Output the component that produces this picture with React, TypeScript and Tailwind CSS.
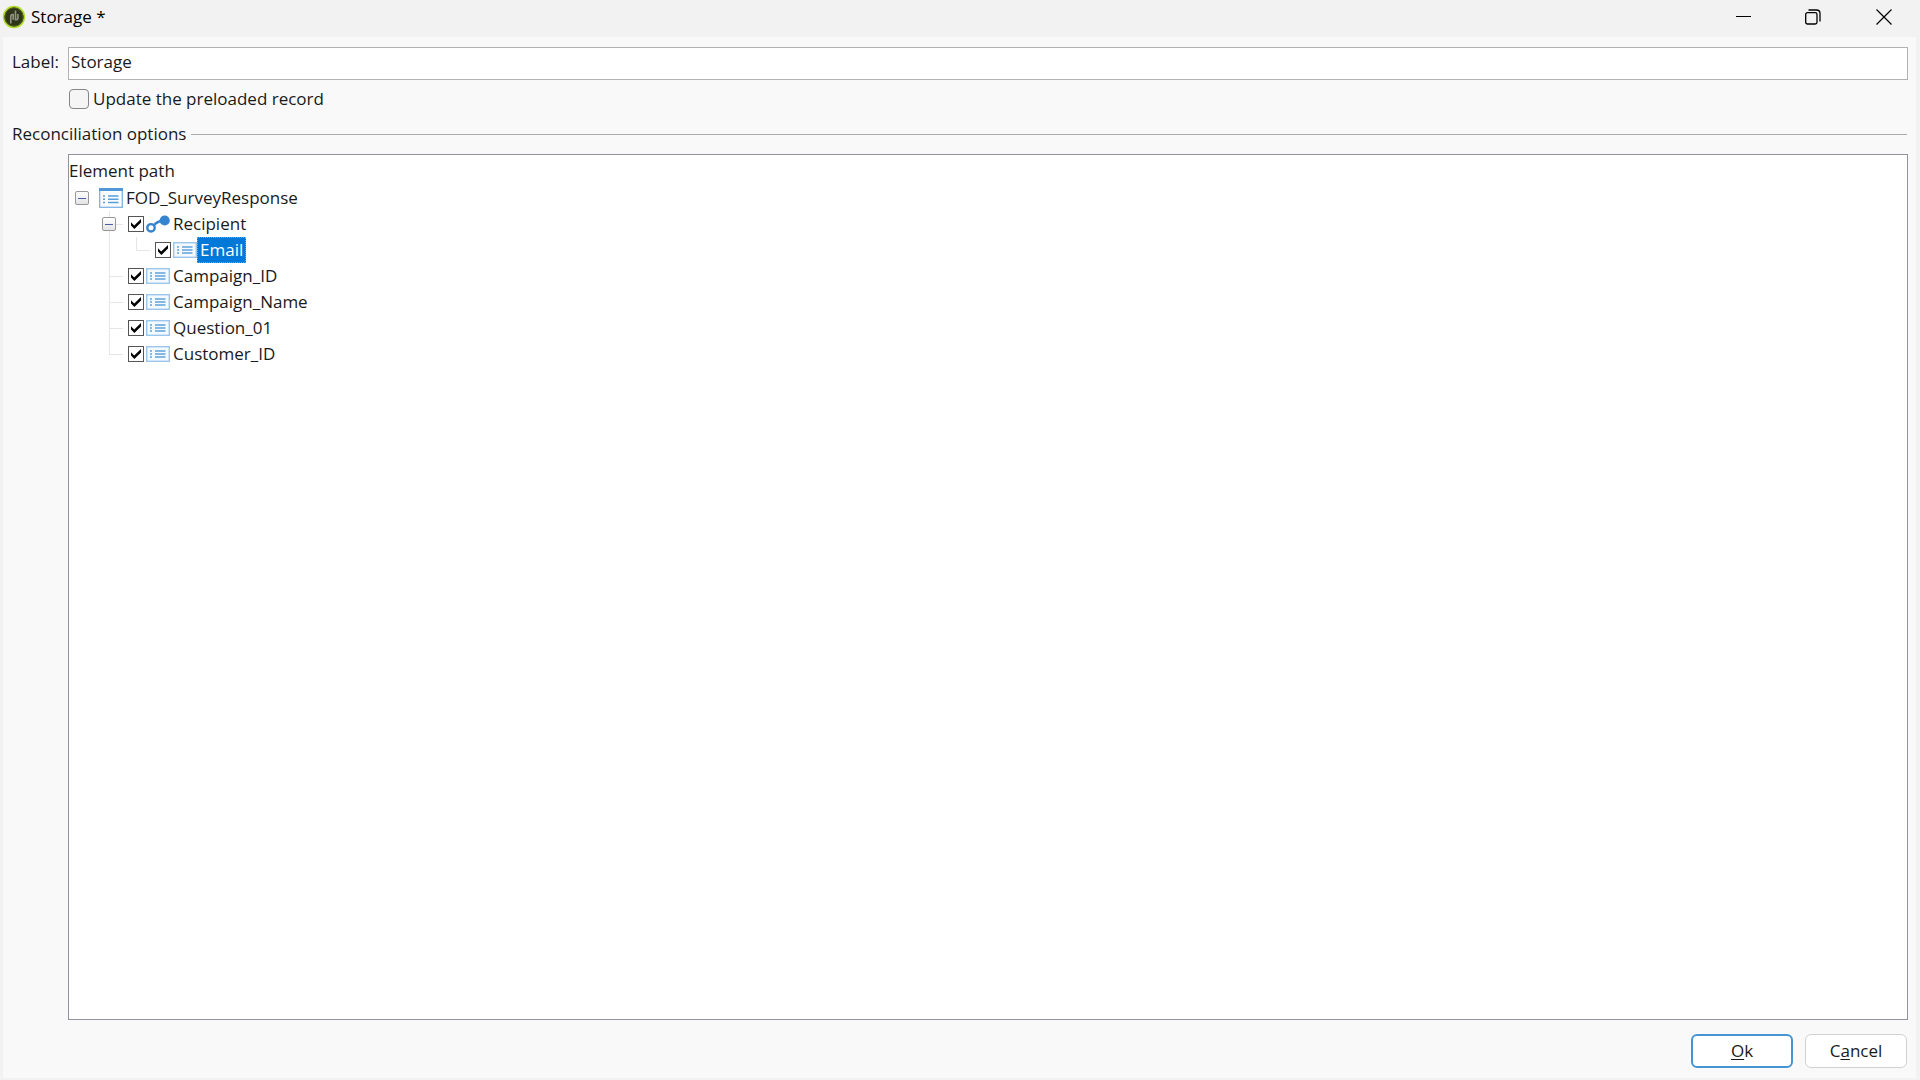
import { useState } from "react"
import clsx from "clsx"

type Guide = "blank" | "line" | "tee" | "corner" | "open" | "root"

type TreeNode = {
  name: string
  icon: "schema" | "link" | "field"
  guides: Guide[]
  checkable: boolean
}

const nodes: TreeNode[] = [
  { name: "FOD_SurveyResponse", icon: "schema", guides: ["root"], checkable: false },
  { name: "Recipient", icon: "link", guides: ["blank", "open"], checkable: true },
  { name: "Email", icon: "field", guides: ["blank", "line", "corner"], checkable: true },
  { name: "Campaign_ID", icon: "field", guides: ["blank", "tee"], checkable: true },
  { name: "Campaign_Name", icon: "field", guides: ["blank", "tee"], checkable: true },
  { name: "Question_01", icon: "field", guides: ["blank", "tee"], checkable: true },
  { name: "Customer_ID", icon: "field", guides: ["blank", "corner"], checkable: true },
]

function AppLogo() {
  return (
    <svg className="h-6 w-6" viewBox="0 0 24 24" aria-hidden="true">
      <circle cx="12" cy="12" r="10.4" fill="#2f3519" stroke="#b4dc2c" strokeWidth="1.6" />
      <circle cx="12" cy="12" r="9.2" fill="none" stroke="#55651f" strokeWidth="1" />
      <path
        d="M8.8 18.5v-7q0-2 1.800-2h.6v5.200M13.500 5.500v9.300h.6q1.800 0 1.800-2V9"
        fill="none"
        stroke="#8f9482"
        strokeWidth="1.6"
      />
    </svg>
  )
}

function SchemaIcon() {
  return (
    <svg className="h-5 w-6" viewBox="0 0 24 20" aria-hidden="true">
      <rect x="0.7" y="0.7" width="22.6" height="18.6" fill="#fafdff" stroke="#7db3e3" strokeWidth="1.3" />
      <path d="M0 1.5h24" stroke="#4f97d9" strokeWidth="3" />
      <path d="M4 8h2M4 11.2h2M4 14.4h2M9 8h10.5M9 11.2h10.5M9 14.4h10.5" stroke="#5a9edb" strokeWidth="1.5" />
    </svg>
  )
}

function FieldIcon() {
  return (
    <svg className="h-4 w-6" viewBox="0 0 24 16" aria-hidden="true">
      <rect x="0.7" y="0.7" width="22.6" height="14.6" fill="#f4faff" stroke="#9cc6eb" strokeWidth="1.4" />
      <path d="M4 5h2M4 8h2M4 11h2M9 5h10.5M9 8h10.5M9 11h10.5" stroke="#62a2dc" strokeWidth="1.5" />
    </svg>
  )
}

function LinkIcon() {
  return (
    <svg className="h-[18px] w-6" viewBox="0 0 24 18" aria-hidden="true">
      <circle cx="5" cy="12.8" r="3.7" fill="#fff" stroke="#3584d0" strokeWidth="2.4" />
      <path d="M8.5 9.8Q11 6.6 17 5.5" fill="none" stroke="#3584d0" strokeWidth="2.4" />
      <circle cx="18.7" cy="5.5" r="5.1" fill="#3584d0" />
    </svg>
  )
}

const icons = { schema: <SchemaIcon />, link: <LinkIcon />, field: <FieldIcon /> }

function Expander() {
  return (
    <button
      type="button"
      aria-label="Collapse"
      className="flex h-[14px] w-[14px] shrink-0 items-center justify-center rounded-xs border border-[#989898] bg-linear-to-b from-white to-[#e4e4e4]"
    >
      <span className="h-px w-2 bg-[#4a5fa8]" />
    </button>
  )
}

function GuideCell({ kind }: { kind: Guide }) {
  if (kind === "blank") return <span className="w-[27px]" />

  if (kind === "root" || kind === "open") {
    const line = kind === "open" ? "bg-[#e6e6e6]" : "bg-transparent"
    return (
      <span className="flex w-[27px] items-center pl-[6px]">
        <span className="flex h-full flex-col items-center">
          <span className={clsx("w-px flex-1", line)} />
          <Expander />
          <span className={clsx("w-px flex-1", line)} />
        </span>
        <span className={clsx("h-px flex-1", line)} />
      </span>
    )
  }

  return (
    <span className="flex w-[27px] flex-col pl-[13px]">
      <span className={clsx("flex-1 border-l border-[#e6e6e6]", kind !== "line" && "border-b")} />
      <span className={clsx("flex-1 border-[#e6e6e6]", kind !== "corner" && "border-l")} />
    </span>
  )
}

function TreeCheckbox({ id }: { id: string }) {
  return (
    <span className="mr-[2px] ml-[5px] grid h-4 w-4">
      <input
        id={id}
        type="checkbox"
        defaultChecked
        className="peer col-start-1 row-start-1 h-4 w-4 appearance-none border border-[#555] bg-white"
      />
      <svg
        className="pointer-events-none col-start-1 row-start-1 hidden h-4 w-4 peer-checked:block"
        viewBox="0 0 16 16"
        aria-hidden="true"
      >
        <path d="M3 6.3l3.2 3.1L13 3v3.4L6.4 13 3 9.6z" fill="#000" />
      </svg>
    </span>
  )
}

function TreeRow({ node, selected, onSelect }: { node: TreeNode; selected: boolean; onSelect: () => void }) {
  return (
    <li role="treeitem" aria-selected={selected} className="flex h-[26px] items-center" onClick={onSelect}>
      <span className="flex self-stretch">
        {node.guides.map((kind, i) => (
          <GuideCell key={i} kind={kind} />
        ))}
      </span>
      {node.checkable ? <TreeCheckbox id={node.name} /> : <span className="w-[3px]" />}
      {icons[node.icon]}
      <label
        htmlFor={node.checkable ? node.name : undefined}
        className={clsx(
          "border border-dotted px-[2px] leading-6",
          selected ? "border-[#ff8728] bg-[#0078d7] text-white" : "border-transparent",
        )}
      >
        {node.name}
      </label>
    </li>
  )
}

function TitleBar() {
  return (
    <header className="flex h-[37px] items-start bg-[#f2f2f2] pl-[2px]">
      <div className="flex h-[34px] items-center gap-[5px]">
        <AppLogo />
        <h1 className="text-black">Storage *</h1>
      </div>
      <div className="ml-auto flex h-[34px]">
        <button type="button" aria-label="Minimize" className="flex w-[70px] items-center justify-center">
          <svg className="h-4 w-4" viewBox="0 0 16 16" fill="none" stroke="#000">
            <path d="M1 7.5h15" />
          </svg>
        </button>
        <button type="button" aria-label="Restore" className="flex w-[70px] items-center justify-center">
          <svg className="h-4 w-4" viewBox="0 0 16 16" fill="none" stroke="#000" strokeWidth="1.3">
            <rect x="0.7" y="3.7" width="11.3" height="11.3" rx="1.8" />
            <path d="M3.5 1h8Q15 1 15 4.5v8" />
          </svg>
        </button>
        <button type="button" aria-label="Close" className="flex w-[72px] items-center justify-center">
          <svg className="h-4 w-4" viewBox="0 0 16 16" fill="none" stroke="#000" strokeWidth="1.2">
            <path d="M.5.5l15 15M15.5.5l-15 15" />
          </svg>
        </button>
      </div>
    </header>
  )
}

export default function App() {
  const [selected, setSelected] = useState("Email")

  return (
    <div className="flex min-h-screen flex-col bg-[#f2f2f2] font-['Open_Sans','Noto_Sans',sans-serif] text-[17px] leading-6 text-[#1a1a1a]">
      <TitleBar />
      <main className="mr-1 mb-[2px] ml-[3px] flex flex-1 flex-col bg-[#f9f9f9] pt-[10px] pr-2 pb-[10px] pl-[9px]">
        <div className="flex">
          <label htmlFor="label" className="w-14 pt-[3px]">
            Label:
          </label>
          <input
            id="label"
            type="text"
            defaultValue="Storage"
            className="h-[33px] flex-1 border border-[#b2b2b2] bg-white px-[2px] pb-1 outline-none"
          />
        </div>

        <div className="mt-[7px] ml-[57px] flex items-center gap-1">
          <input
            id="update"
            type="checkbox"
            className="h-5 w-5 appearance-none rounded-sm border border-[#858585] bg-[#f5f5f5] checked:bg-[#0078d7]"
          />
          <label htmlFor="update">Update the preloaded record</label>
        </div>

        <section className="flex flex-1 flex-col pt-[11px]">
          <div className="flex items-center gap-[5px] pr-px">
            <h2>Reconciliation options</h2>
            <span className="h-px flex-1 bg-[#ababab]" />
          </div>
          <div className="mt-2 ml-14 flex-1 border border-[#92929a] bg-white">
            <p className="pt-1">Element path</p>
            <ul role="tree" className="pt-[2px]">
              {nodes.map((node) => (
                <TreeRow
                  key={node.name}
                  node={node}
                  selected={selected === node.name}
                  onSelect={() => setSelected(node.name)}
                />
              ))}
            </ul>
          </div>
        </section>

        <footer className="mt-[14px] flex justify-end gap-3 pr-px">
          <button type="button" className="h-[34px] w-[102px] rounded-md border-2 border-[#4595d5] bg-white">
            <span className="underline underline-offset-2">O</span>k
          </button>
          <button type="button" className="h-[34px] w-[102px] rounded-md border border-[#d2d2d2] bg-white">
            C<span className="underline underline-offset-2">a</span>ncel
          </button>
        </footer>
      </main>
    </div>
  )
}
